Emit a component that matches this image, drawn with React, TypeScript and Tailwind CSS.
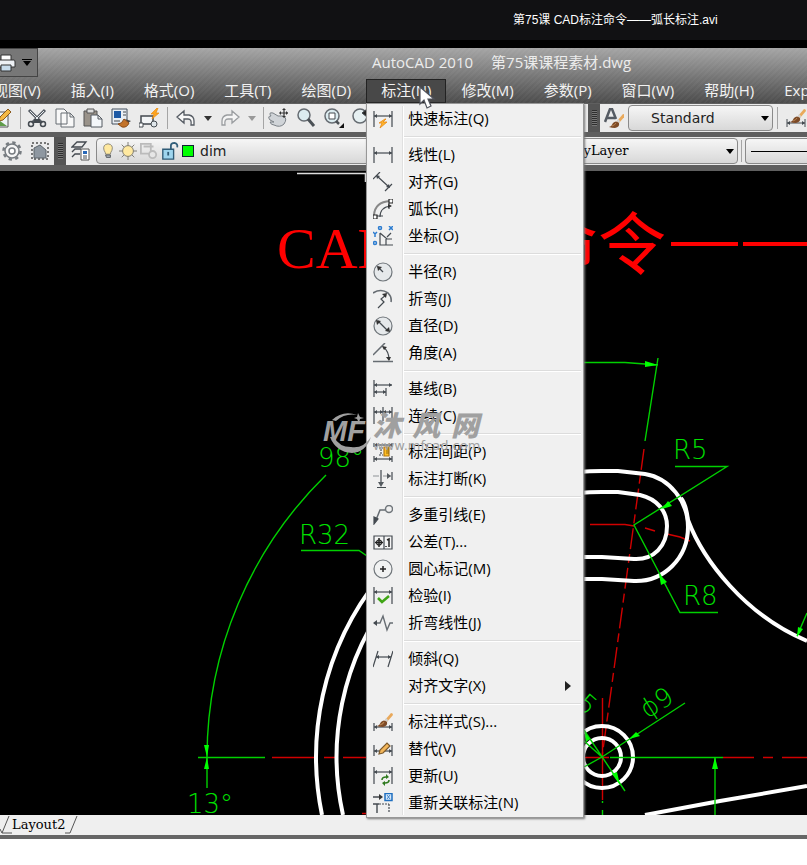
import React from "react";
import clsx from "clsx";

const menus = [
  "视图(V)",
  "插入(I)",
  "格式(O)",
  "工具(T)",
  "绘图(D)",
  "标注(N)",
  "修改(M)",
  "参数(P)",
  "窗口(W)",
  "帮助(H)",
  "Express",
];

interface Entry {
  label: string;
  icon?: string;
  sub?: boolean;
}

const groups: Entry[][] = [
  [{ label: "快速标注(Q)", icon: "quick" }],
  [
    { label: "线性(L)", icon: "linear" },
    { label: "对齐(G)", icon: "aligned" },
    { label: "弧长(H)", icon: "arc" },
    { label: "坐标(O)", icon: "ordinate" },
  ],
  [
    { label: "半径(R)", icon: "radius" },
    { label: "折弯(J)", icon: "jogged" },
    { label: "直径(D)", icon: "diameter" },
    { label: "角度(A)", icon: "angular" },
  ],
  [
    { label: "基线(B)", icon: "baseline" },
    { label: "连续(C)", icon: "continue" },
  ],
  [
    { label: "标注间距(P)", icon: "space" },
    { label: "标注打断(K)", icon: "break" },
  ],
  [
    { label: "多重引线(E)", icon: "leader" },
    { label: "公差(T)...", icon: "tolerance" },
    { label: "圆心标记(M)", icon: "center" },
    { label: "检验(I)", icon: "inspect" },
    { label: "折弯线性(J)", icon: "jogline" },
  ],
  [
    { label: "倾斜(Q)", icon: "oblique" },
    { label: "对齐文字(X)", sub: true },
  ],
  [
    { label: "标注样式(S)...", icon: "style" },
    { label: "替代(V)", icon: "override" },
    { label: "更新(U)", icon: "update" },
    { label: "重新关联标注(N)", icon: "reassociate" },
  ],
];

// horizontal dimension line with arrow heads between x1 and x2
const Dim = ({ y, x1 = 1, x2 = 19 }: { y: number; x1?: number; x2?: number }) => (
  <>
    <path d={`M${x1} ${y}H${x2}`} />
    <path
      d={`M${x1} ${y}l3 -2v4zM${x2} ${y}l-3 -2v4z`}
      fill="#444a50"
      stroke="none"
    />
  </>
);

const Brush = () => (
  <g stroke="none">
    <path d="M12 8 18 1q2 0 2 2L14 10z" fill="#e9a95b" />
    <path d="M12 8 14 10 15 8 13 6z" fill="#cfd3d8" />
    <path d="M4 14q3-1 4-4 3-3 6 0 1 4-4 5-3 0-6-1z" fill="#7d4a26" />
    <path d="M7 13q3-1 4-3" stroke="#b9834f" fill="none" />
  </g>
);

const iconArt: { [key: string]: React.ReactNode } = {
  quick: (
    <>
      <path d="M1 2V18M19 2V18" />
      <Dim y={7} />
      <path d="M12 10 6 14h3l-2 5 7-6h-4l3-3z" fill="#ffb52b" stroke="#e88913" strokeWidth="0.800" />
    </>
  ),
  linear: (
    <>
      <path d="M1 2V18M19 2V18" />
      <Dim y={8} />
    </>
  ),
  aligned: (
    <>
      <path d="M0 7 7 0M12 19 19 12M4 4 16 15" />
      <path d="M3 3 7 4 4 7zM17 16 13 15 16 12z" fill="#444a50" stroke="none" />
    </>
  ),
  arc: (
    <>
      <path d="M1 16Q2 3 17 2" stroke="#888" strokeWidth="2" />
      <path d="M7 18Q7 8 18 7M16 4v6M4 17h6" />
      <path d="M16 0h4v4h-4zM0 16h4v4H0z" fill="#fff" stroke="#222" />
      <path d="M19 7 15 5v4z" fill="#333" stroke="none" />
    </>
  ),
  ordinate: (
    <>
      <path d="M7 7V19H20M7 7 14 13H19M13 19V13M18 7 14 11" />
      <g stroke="#2c7cd0" strokeWidth="1.500">
        <circle cx="7" cy="2" r="1.5" />
        <path d="M16 0 20 4M20 0 16 4M0 6 2 8 4 6M2 8V11" />
        <circle cx="2" cy="17" r="1.5" />
      </g>
    </>
  ),
  radius: (
    <>
      <circle cx="10" cy="10" r="9" fill="#e6e9eb" stroke="#70767b" />
      <path d="M10 10 5 5" />
      <path d="M4 4 9 5 5 9z" fill="#333" stroke="none" />
    </>
  ),
  jogged: (
    <>
      <path d="M0 4Q8-1 15 4 19 8 18 13" strokeWidth="1.6" stroke="#666c72" />
      <path d="M5 19 11 13 8 10 13 6" />
      <path d="M14 4 13 9 9 5z" fill="#333" stroke="none" />
    </>
  ),
  diameter: (
    <>
      <circle cx="10" cy="10" r="9" fill="#e6e9eb" stroke="#70767b" />
      <path d="M5 5 15 15" />
      <path d="M3 4 8 5 4 9zM17 16 12 15 16 11z" fill="#333" stroke="none" />
    </>
  ),
  angular: (
    <>
      <path d="M0 12 12 0M0 18.500H20" stroke="#666c72" strokeWidth="1.500" />
      <path d="M10 4Q16 8 16 17" />
      <path d="M9 3 14 4 11 7zM16 18 13 14h5z" fill="#333" stroke="none" />
    </>
  ),
  baseline: (
    <>
      <path d="M1 1V18M13 9V17" />
      <Dim y={6} />
      <Dim y={13} x2={13} />
    </>
  ),
  continue: (
    <>
      <path d="M1 1V18M10 1V15M19 1V18" />
      <Dim y={6} x2={10} />
      <Dim y={6} x1={10} />
    </>
  ),
  space: (
    <>
      <path d="M1 1V5M19 1V5M1 14V20M19 14V20" />
      <Dim y={3} />
      <Dim y={17} />
      <path d="M6 6h4M8 7V13M6 13h4" strokeDasharray="2 1" />
      <path d="M11 5h5v9h-5z" fill="#ffbe22" stroke="#b37a12" />
      <path d="M13 7h3M13 9h3M13 11h3" stroke="#7a5510" strokeWidth="0.800" />
    </>
  ),
  break: (
    <>
      <path d="M0 7H6M10 7H18" stroke="#8d9296" />
      <path d="M19 3V11M8 1V15M4 18.500H13" />
      <path d="M8 18 5 13h6zM18 7 14 4v6z" fill="#555b60" stroke="none" />
    </>
  ),
  leader: (
    <>
      <circle cx="16" cy="4" r="3.500" stroke="#70767b" strokeWidth="1.500" />
      <path d="M12 5H7L3 15" stroke="#666c72" strokeWidth="1.500" />
      <path d="M1 19V12L5 14z" fill="#444a50" />
    </>
  ),
  tolerance: (
    <>
      <path d="M1 4H19V17H1zM11 4V17" fill="#f5f5f5" />
      <path d="M2 10.500H10M6 6V15" strokeWidth="1.500" stroke="#222" />
      <circle cx="6" cy="10.500" r="2.500" stroke="#222" />
      <path d="M13 14v1M14 8l2-1v8" stroke="#222" strokeWidth="1.500" />
    </>
  ),
  center: (
    <>
      <circle cx="10" cy="10" r="9" fill="#f1f2f2" stroke="#70767b" />
      <path d="M10 7V13M7 10H13" stroke="#222" strokeWidth="1.500" />
    </>
  ),
  inspect: (
    <>
      <path d="M1 1V18M19 1V18" />
      <Dim y={6} />
      <path d="M5 12 9 16 16 10" stroke="#3fa515" strokeWidth="2.500" />
    </>
  ),
  jogline: (
    <>
      <path d="M1 10H7L10 3 14 17 17 10H20" stroke="#666c72" strokeWidth="1.400" />
      <path d="M0 10 4 7V13z" fill="#444a50" stroke="none" />
    </>
  ),
  oblique: (
    <>
      <path d="M5 2 0 18M20 2 15 18" />
      <Dim y={8} x1={3} x2={18} />
    </>
  ),
  style: (
    <>
      <path d="M1 11V19M19 11V19" />
      <Dim y={15} />
      <Brush />
    </>
  ),
  override: (
    <>
      <path d="M1 6V17M19 6V17" />
      <Dim y={12} />
      <path d="M6 15 7 11 14 4 17 7 10 14z" fill="#f3b65a" stroke="#7c5a2c" />
    </>
  ),
  update: (
    <>
      <path d="M1 1V18M19 1V18" />
      <Dim y={6} />
      <path d="M9 14Q9 11 13 11M16 14Q16 17 12 17" stroke="#2f7a1f" strokeWidth="1.600" />
      <path d="M13 8 16 11 13 13zM12 15 9 17 12 20z" fill="#2f7a1f" stroke="none" />
    </>
  ),
  reassociate: (
    <>
      <path d="M0 4H8M0 11H6M4 11V20" strokeWidth="1.400" />
      <path d="M10 4 6 1V7z" fill="#333" stroke="none" />
      <path d="M6 11H16M16 11V20" strokeDasharray="2 1" />
      <path d="M12 0.500H19V7.500H12z" fill="#d7eafc" stroke="#1f6fc0" strokeWidth="1.500" />
      <path d="M14 2 17 6M17 2 14 6" stroke="#1f6fc0" strokeWidth="0.800" />
    </>
  ),
};

const MenuIcon = ({ name }: { name?: string }) => (
  <svg
    viewBox="0 0 20 20"
    className="h-5 w-5 shrink-0"
    fill="none"
    stroke="#444a50"
    strokeWidth="1.200"
    aria-hidden="true"
  >
    {name ? iconArt[name] : null}
  </svg>
);

const DimensionMenu = () => (
  <div className="absolute top-full left-0 z-20 w-[218px] border border-[#979797] bg-[#f0f0f0] py-px text-black shadow-[1px_1px_2px_#777]">
    <div className="absolute inset-y-0.5 left-[35px] w-0.5 border-l border-[#e0e0e0] bg-white" />
    {groups.map((group, i) => (
      <div key={i} className="relative">
        {i > 0 && (
          <div className="flex h-[9px] items-center pr-0.5 pl-[37px]">
            <div className="h-0.5 w-full border-t border-[#dcdcdc] bg-white" />
          </div>
        )}
        {group.map((entry) => (
          <button
            key={entry.label}
            type="button"
            className="flex h-[27px] w-full items-center gap-[15px] pr-3 pl-1.5 text-left text-[15px] whitespace-nowrap"
          >
            <MenuIcon name={entry.icon} />
            <span className="flex-1">{entry.label}</span>
            {entry.sub && (
              <svg viewBox="0 0 6 10" className="h-2.5 w-1.5" aria-hidden="true">
                <path d="M0 0 6 5 0 10z" fill="#222" />
              </svg>
            )}
          </button>
        ))}
      </div>
    ))}
  </div>
);

const Cursor = () => (
  <svg
    viewBox="0 0 18 26"
    className="pointer-events-none absolute top-2 left-[52px] z-30 h-[26px] w-[18px]"
    aria-hidden="true"
  >
    <path
      d="M2 1V18L6 14 9 22 13 20 10 13H16z"
      fill="#fff"
      stroke="#50535c"
      strokeWidth="1.200"
    />
  </svg>
);

const toolArt: { [key: string]: React.ReactNode } = {
  print: (
    <>
      <path d="M5 2H15V8H5z" fill="#fff" stroke="#333" />
      <path d="M2 7H18Q19 7 19 9V14H1V9Q1 7 2 7z" fill="#eef1f5" stroke="#333" />
      <path d="M5 12H15V18H5z" fill="#c8dcec" stroke="#333" />
    </>
  ),
  edit: (
    <>
      <path d="M1 4H16V19H1z" fill="#eef4f7" stroke="#555" />
      <path d="M2 18 8 13 15 18z" fill="#5f9c49" stroke="none" />
      <path d="M7 13 8 9 16 1 19 4 11 12z" fill="#f5b944" stroke="#8b5a1d" />
    </>
  ),
  cut: (
    <>
      <path d="M2 2 15 15M18 2 5 15" stroke="#555b63" strokeWidth="3" />
      <path d="M3 3 12 12M17 3 8 12" stroke="#e9edf0" />
      <circle cx="4" cy="16" r="2.500" strokeWidth="1.500" />
      <circle cx="16" cy="16" r="2.500" strokeWidth="1.500" />
      <path d="M7 11h6v4H7z" fill="#444a50" stroke="none" />
    </>
  ),
  copy: (
    <path
      d="M1 1H9L12 4V16H1zM6 5H15L19 9V19H6zM15 5V9H19"
      fill="#f8f8f8"
      stroke="#666c72"
    />
  ),
  paste: (
    <>
      <path d="M1 3H14V18H1z" fill="#9a938a" stroke="#555" />
      <path d="M4 1H11V5H4z" fill="#ddd" stroke="#555" />
      <path d="M8 7H15L19 11V19H8zM15 7V11H19" fill="#f4f7fa" stroke="#555b63" />
    </>
  ),
  match: (
    <>
      <path d="M1 1H16V16H1z" fill="#e9eef4" stroke="#44505f" />
      <path d="M3 3H10V10H3z" fill="#1d59a5" stroke="none" />
      <path d="M12 4h3M12 7h3M3 13h6" />
      <path d="M14 11 20 13 17 15z" fill="#444" stroke="none" />
      <path d="M7 16Q11 16 13 11L18 15Q16 20 11 19z" fill="#c3732a" stroke="#8a4b17" />
    </>
  ),
  block: (
    <>
      <path d="M2 8H14V16H2z" fill="#f3f5f7" strokeWidth="1.500" />
      <path d="M0 15h4v4H0z" fill="#fff" />
      <circle cx="15" cy="16" r="3" fill="#dfe6ea" />
      <path d="M18 0 12 6h3l-2 5 7-6h-3l2-5z" fill="#ffa51e" stroke="#e58b12" strokeWidth="0.700" />
    </>
  ),
  undo: (
    <path
      d="M1 9 8 3V7H13Q18 8 18 13V17H15Q16 11 12 11H8V15z"
      fill="#f8f8f8"
      stroke="#555b63"
      strokeWidth="1.300"
    />
  ),
  redo: (
    <path
      d="M19 9 12 3V7H7Q2 8 2 13V17H5Q4 11 8 11H12V15z"
      fill="#f5f5f5"
      stroke="#9a9da0"
      strokeWidth="1.300"
    />
  ),
  pan: (
    <>
      <path d="M2 12Q-1 8 3 8 0 4 5 5L10 8 15 8Q20 10 16 16 12 20 6 17 3 17 2 14L6 14z" fill="#d0d4d8" stroke="#7b8187" />
      <path d="M16 1V9M12 5H20" stroke="#333" strokeWidth="1.200" />
      <path d="M16 0 14 2H18zM16 10 14 8H18zM11 5 13 3V7zM20 5 18 3V7z" fill="#333" stroke="none" />
    </>
  ),
  zoom: (
    <>
      <circle cx="8" cy="7" r="6" fill="#dcecf0" stroke="#666c72" strokeWidth="1.500" />
      <path d="M12 11 18 18" stroke="#4b5156" strokeWidth="3" />
    </>
  ),
  zoomwin: (
    <>
      <circle cx="8" cy="8" r="7" fill="#dcecf0" stroke="#666c72" strokeWidth="1.500" />
      <path d="M5 5H11V11H5z" fill="#fff" />
      <path d="M12 13 15 16" stroke="#4b5156" strokeWidth="2.500" />
      <path d="M20 15V20H15z" fill="#111" stroke="none" />
    </>
  ),
  zoomprev: (
    <>
      <circle cx="8" cy="8" r="7" fill="#e6f0f2" stroke="#666c72" strokeWidth="1.500" />
      <path d="M10 5 15 1V9z" fill="#222" />
    </>
  ),
  text: (
    <>
      <path d="M1 14 6 1H8L12 11M3 10H11" stroke="#555b63" strokeWidth="2.500" />
      <g transform="translate(1 5)">
        <Brush />
      </g>
    </>
  ),
  dimstyle: (
    <>
      <path d="M1 11V19M19 11V19" />
      <Dim y={15} />
      <Brush />
    </>
  ),
  gear: (
    <>
      <circle cx="10" cy="10" r="8.500" stroke="#777c81" strokeWidth="2.500" strokeDasharray="3.300 3.375" />
      <circle cx="10" cy="10" r="7" fill="#f6f6f6" stroke="#777c81" strokeWidth="1.500" />
      <circle cx="10" cy="10" r="3" fill="#fff" stroke="#777c81" strokeWidth="1.500" />
    </>
  ),
  workspace: (
    <>
      <path d="M2 2H18V18H2z" stroke="#777" strokeDasharray="2 2" strokeWidth="2" />
      <path d="M4 17V7L10 4 16 9V17z" fill="#8f98a1" stroke="#5c646b" />
    </>
  ),
  layers: (
    <>
      <path d="M1 6 6 1H15L11 6zM1 11 4 8H10M1 16 4 13H9" strokeWidth="1.300" />
      <path d="M10 8H18V19H10z" fill="#fff" stroke="#555" />
      <path d="M12 10H16V13H12z" fill="#2868b8" stroke="none" />
      <path d="M12 15H16M12 17H16" />
    </>
  ),
  bulb: (
    <>
      <path d="M7 14Q7 12 5 9 3 2 10 1 17 2 15 9 13 12 13 14z" fill="#ffe9a0" stroke="#77756b" />
      <path d="M7 15H13V18H8z" fill="#a9afb5" />
    </>
  ),
  sun: (
    <>
      <path d="M10 0V20M0 10H20M3 3 17 17M17 3 3 17" stroke="#77756b" />
      <circle cx="10" cy="10" r="6" fill="#ffe9a0" stroke="#77756b" />
    </>
  ),
  freeze: (
    <>
      <path d="M1 2H12V13H1zM4 5H15" stroke="#bbb" strokeWidth="2" />
      <circle cx="14" cy="14" r="4" fill="#e6e6e6" stroke="#bbb" strokeWidth="2" />
    </>
  ),
  lock: (
    <>
      <path d="M11 8V4Q11 1 15 1 19 2 18 6" stroke="#35617c" strokeWidth="2" />
      <path d="M2 8H14V19H2z" fill="#9ed5ee" stroke="#2f5b76" strokeWidth="1.500" />
      <path d="M8 11V15" stroke="#2f5b76" strokeWidth="2" />
    </>
  ),
};

const Tool = ({ name, className = "h-5 w-5" }: { name: string; className?: string }) => (
  <svg
    viewBox="0 0 20 20"
    className={clsx("shrink-0", className)}
    fill="none"
    stroke="#444a50"
    aria-hidden="true"
  >
    {toolArt[name]}
  </svg>
);

const ToolButton = ({ name }: { name: string }) => (
  <button type="button" aria-label={name} className="flex w-7 shrink-0 justify-center">
    <Tool name={name} />
  </button>
);

const Caret = ({ className = "text-black" }: { className?: string }) => (
  <svg viewBox="0 0 10 6" className={clsx("h-[5px] w-2 shrink-0", className)} aria-hidden="true">
    <path d="M0 0H10L5 6z" fill="currentColor" />
  </svg>
);

const Divider = () => <div className="h-[22px] w-px shrink-0 bg-[#a5a5a5]" />;

const Grip = () => (
  <div className="flex h-full w-3 shrink-0 items-center justify-center bg-[#555]">
    <div className="h-4 w-[5px] bg-[repeating-linear-gradient(#2e2e2e_0_1px,#777_1px_2px)]" />
  </div>
);

const selectStyle =
  "h-[26px] w-full appearance-none rounded-sm border border-[#8a8a8a] bg-linear-to-b from-[#f6f6f6] to-[#d8d8d8] text-[#222]";

const TitleBar = () => (
  <div className="flex h-[30px] items-start">
    <div className="flex h-[29px] w-[38px] shrink-0 items-center gap-1.5 overflow-hidden border border-l-0 border-[#444] bg-[#777]">
      <Tool name="print" className="-ml-1 h-5 w-5" />
      <span className="flex flex-col items-center gap-px">
        <span className="h-px w-2.5 bg-black" />
        <Caret className="text-black" />
      </span>
    </div>
    <h1 className="flex gap-[18px] pt-[3px] pl-[334px] text-[15px] leading-[22px] whitespace-nowrap text-[#ececec]">
      <span>AutoCAD 2010</span>
      <span>第75课课程素材.dwg</span>
    </h1>
  </div>
);

const MenuBar = () => (
  <nav className="-ml-[22px] flex h-[25px] items-center text-[15px] text-[#f2f2f2]">
    {menus.map((menu) => {
      const open = menu === "标注(N)";
      return (
        <div key={menu} className="relative flex h-full shrink-0 items-center">
          <button
            type="button"
            className={clsx(
              "h-6 border px-[14px] pb-0.5 leading-5 whitespace-nowrap",
              open ? "border-[#222] bg-[#484848]" : "border-transparent"
            )}
          >
            {menu}
          </button>
          {open && <DimensionMenu />}
          {open && <Cursor />}
        </div>
      );
    })}
  </nav>
);

const Toolbars = () => (
  <div className="bg-[#5f5f5f] pt-px pb-1.5">
    <div className="flex h-7 bg-[#ebebeb]">
      <div className="flex w-[588px] shrink-0 items-center overflow-hidden">
        <div className="-ml-2 flex w-7 shrink-0">
          <Tool name="edit" />
        </div>
        <Divider />
        <div className="flex pl-0.5">
          {["cut", "copy", "paste", "match", "block"].map((name) => (
            <ToolButton key={name} name={name} />
          ))}
        </div>
        <div className="pr-1 pl-1">
          <Divider />
        </div>
        <ToolButton name="undo" />
        <div className="flex w-4 justify-center">
          <Caret className="text-[#333]" />
        </div>
        <ToolButton name="redo" />
        <div className="flex w-4 justify-center">
          <Caret className="text-[#999]" />
        </div>
        <div className="pl-[3px]">
          <Divider />
        </div>
        {["pan", "zoom", "zoomwin", "zoomprev"].map((name) => (
          <ToolButton key={name} name={name} />
        ))}
      </div>
      <Grip />
      <div className="flex flex-1 items-center overflow-hidden">
        <ToolButton name="text" />
        <label className="relative flex w-[145px] shrink-0 items-center">
          <select
            aria-label="Text style"
            className={clsx(selectStyle, "pl-[22px] font-['DejaVu_Sans'] text-sm")}
          >
            <option>Standard</option>
          </select>
          <span className="pointer-events-none absolute right-1">
            <Caret />
          </span>
        </label>
        <div className="px-1">
          <Divider />
        </div>
        <ToolButton name="dimstyle" />
      </div>
    </div>

    <div className="mt-[5px] flex h-7 items-center bg-[#ebebeb]">
      <div className="flex w-[54px] shrink-0">
        <div className="-ml-0.5 flex">
          <ToolButton name="gear" />
          <ToolButton name="workspace" />
        </div>
      </div>
      <Grip />
      <div className="flex w-[30px] shrink-0 justify-center">
        <Tool name="layers" />
      </div>
      <label className="relative flex w-[340px] shrink-0 items-center">
        <select
          aria-label="Layer"
          className={clsx(selectStyle, "pl-[103px] font-['DejaVu_Sans'] text-sm")}
        >
          <option>dim</option>
        </select>
        <span className="pointer-events-none absolute left-1 flex items-center gap-[3px]">
          <Tool name="bulb" className="h-[18px] w-4" />
          <Tool name="sun" className="h-[18px] w-[18px]" />
          <Tool name="freeze" className="h-[18px] w-[18px]" />
          <Tool name="lock" className="h-[18px] w-[18px]" />
          <span className="h-3 w-3 border border-[#123] bg-[#00ff00]" />
        </span>
      </label>
      <label className="relative flex w-[302px] shrink-0 items-center">
        <select
          aria-label="Color"
          className={clsx(selectStyle, "pl-[137px] font-['DejaVu_Serif'] text-[13px] text-black")}
        >
          <option>ByLayer</option>
        </select>
        <span className="pointer-events-none absolute right-1">
          <Caret />
        </span>
      </label>
      <div className="px-[3px]">
        <Divider />
      </div>
      <label className="relative flex min-w-[61px] flex-1 items-center">
        <select aria-label="Linetype" className={clsx(selectStyle, "rounded-r-none border-r-0")} />
        <span className="pointer-events-none absolute right-0 left-1.5 h-px bg-black" />
      </label>
    </div>
  </div>
);

const Drawing = () => (
  <svg
    viewBox="0 171 807 644"
    preserveAspectRatio="xMinYMin slice"
    className="block h-[644px] w-full bg-black"
    fill="none"
    role="img"
    aria-label="CAD drawing"
  >
    <path d="M297 173.500H366M365.500 174V182" stroke="#ddd" strokeWidth="1.500" />

    <g fill="#ff0000">
      <text x="277" y="268" className="font-['Liberation_Serif'] text-[58px]">
        CAD
      </text>
      <text x="530" y="269" className="font-['Noto_Sans_CJK_SC',sans-serif] text-[68px]">
        命令
      </text>
      <path d="M671 242H738V246H671zM743 242H807V246H743z" />
    </g>

    {/* construction lines */}
    <g stroke="#d00000" strokeWidth="1.400">
      <path d="M272 757.500H314M324 757.500H336M343 757.500H366M584 757.500H609M723 757.500H754M763 757.500H773M782 757.500H807" />
      <path d="M644 449 602 757" strokeDasharray="21 5 9 5" />
      <path d="M602.500 698V800M362 813.500H366" />
      <path d="M590 524.500H625L634 526M645 528 655 531M667 534 680 537 690 541" />
    </g>

    {/* part outline */}
    <g stroke="#fff" strokeWidth="4">
      <path d="M322 815A286 286 0 0 1 602 471L618 471 645 474C670 478 688 502 688 527 688 558 664 582 634 581L602 579H580" />
      <path d="M343 815A265 265 0 0 1 602 492L618 492 640 495C657 499 667 511 667 526 667 546 654 560 634 559L602 557H580" />
      <path d="M681 498Q686 504 688 520C703 560 745 615 807 641" />
      <path d="M645 815 720 801 807 786" />
      <circle cx="602" cy="757" r="31" />
      <circle cx="602" cy="757" r="19" />
    </g>

    {/* dimensions */}
    <g stroke="#00d000" strokeWidth="1.400">
      <path d="M207 757A395 395 0 0 1 326 475" />
      <path d="M584 362.500 625 362.500 658 365M658 358 645 441" />
      <path d="M675 466.500H727L634 525 680 612.500H718" />
      <path d="M301 550.500H359L367 556" />
      <path d="M198 757.500H265M207 757V788" />
      <path d="M584 767 602 757 685 703M584 730 625 791M584 741 602 757" />
      <path d="M610 757.500H723M715 757V815M602.500 801V803M602.500 810V815" />
      <path d="M807 613 797 636" />
    </g>
    <g fill="#00ff00">
      <path d="M658 365 645 361V367zM662 509 672 506 668 501zM659 574 661 585 667 582z" />
      <path d="M207 757 204 745H209zM207 757 204 769H209zM715 757 712 769H718z" />
      <path d="M629 739 636 732 640 736zM620 785 612 774 617 772zM584 731 590 739 586 742zM797 637 798 627 803 629z" />
    </g>
    <g fill="#00e000" className="font-['DejaVu_Sans'] text-[26px] font-extralight">
      <text x="673" y="459">R5</text>
      <text x="683" y="605">R8</text>
      <text x="299" y="544">R32</text>
      <text x="318" y="467">98°</text>
      <text x="187" y="813">13°</text>
      <text transform="translate(647 719) rotate(-32)">ϕ9</text>
      <text transform="translate(575 706) rotate(40)">5</text>
    </g>
  </svg>
);

const Watermark = () => (
  <div className="pointer-events-none absolute top-[409px] left-[323px] z-30 flex text-[#a0a0a0]">
    <div className="relative h-[46px] w-[50px] shrink-0">
      <svg viewBox="0 0 50 46" className="absolute inset-0 h-full w-full" aria-hidden="true">
        <path
          d="M9 11Q20 1 34 6 22 4 13 12zM7 28Q13 43 29 44 43 43 48 28 40 40 28 38 16 38 11 28zM35 4 37 8 41 9 37 10 36 14 34 10 31 9 34 8z"
          fill="#a0a0a0"
        />
      </svg>
      <span className="absolute top-1.5 left-0 font-['Liberation_Sans'] text-[29px] leading-8 font-bold italic">
        MF
      </span>
    </div>
    <div className="flex flex-col">
      <span className="flex h-[31px] items-center gap-[11px] text-[28px] font-black italic">
        <span>沐</span>
        <span>风</span>
        <span>网</span>
      </span>
      <span className="font-['DejaVu_Sans'] text-[13px] leading-3">www.mfcad.com</span>
    </div>
  </div>
);

const App = () => {
  return (
    <div className="relative overflow-hidden bg-white font-['Open_Sans','Noto_Sans_CJK_SC',sans-serif]">
      <header className="flex h-12 border-b-8 border-black bg-[#111113] pl-[513px]">
        <span className="font-['Liberation_Sans','Noto_Sans_CJK_SC',sans-serif] text-xs leading-10 whitespace-nowrap text-white">
          第75课 CAD标注命令——弧长标注.avi
        </span>
      </header>

      <div className="bg-[repeating-linear-gradient(135deg,#ffffff08_0_2px,transparent_2px_4px),linear-gradient(#a5a5a5,#4c4c4c)]">
        <TitleBar />
        <MenuBar />
      </div>
      <Toolbars />
      <Drawing />

      <footer className="flex h-6 items-start border-b-4 border-[#666] bg-[#efefef]">
        <svg viewBox="0 0 12 20" className="h-5 w-3" fill="none" stroke="#555" aria-hidden="true">
          <path d="M0 14 2 18 9 1M2 18H12" />
        </svg>
        <button type="button" className="font-['DejaVu_Serif'] text-[13px] leading-5 text-black">
          Layout2
        </button>
        <svg viewBox="0 0 14 20" className="h-5 w-3.5" fill="none" stroke="#555" aria-hidden="true">
          <path d="M0 18H5L12 1" />
        </svg>
      </footer>
      <div className="h-[26px] bg-white" />

      <Watermark />
    </div>
  );
};

export default App;
